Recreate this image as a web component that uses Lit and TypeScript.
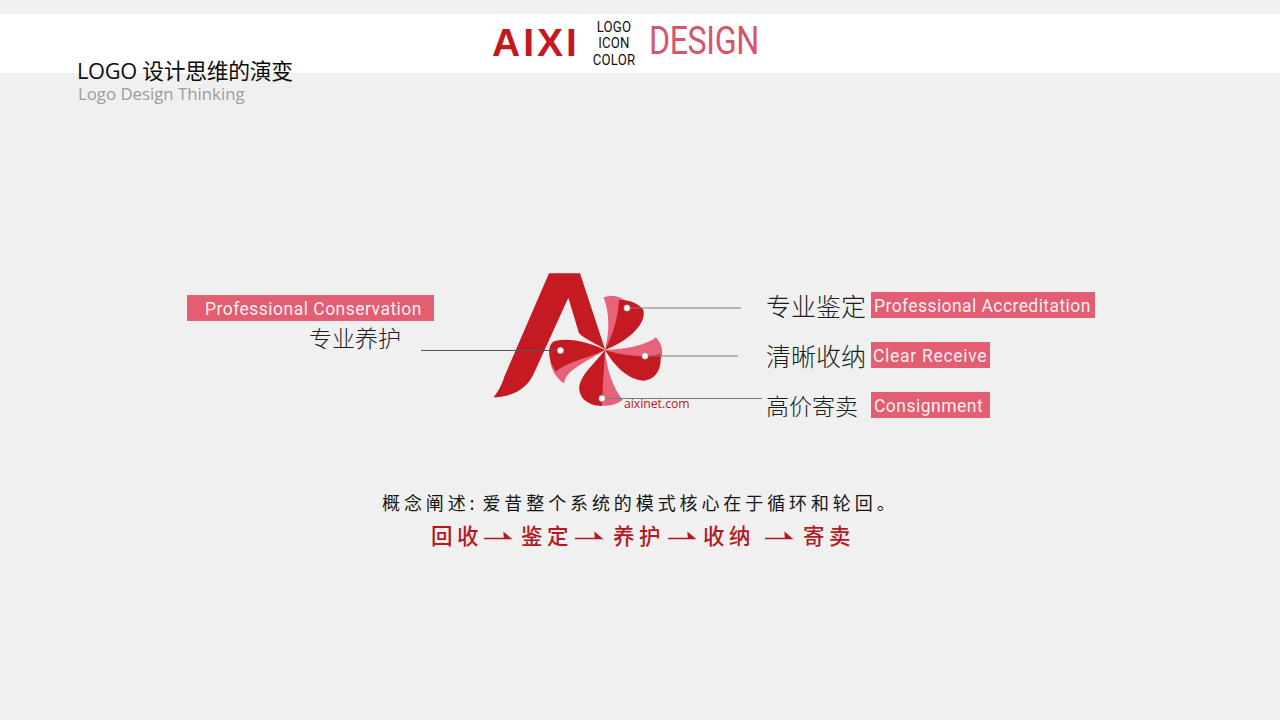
import { LitElement, html, css, svg } from "lit";
import { customElement } from "lit/decorators.js";

const arrow = html`<svg class="arrow" viewBox="0 0 30 12" aria-hidden="true">
  <path d="M0 8.8 H20.5 L20 2.5 L29.5 10.4 H0 Z" fill="#b5191f"></path>
</svg>`;

const logo = svg`
  <path fill="#c61a22" d="M237 40 H330 L405 268 C380 252 345 238 327 220 L295 113 L192 340 C172 385 130 411 70 412 C85 395 95 375 105 345 Z"/>
  <path fill="#e8627a" d="M405 270 C420 210 418 160 401 112 C430 102 455 110 475 128 Z"/>
  <path fill="#c61a22" d="M405 270 C430 220 445 170 447 120 C475 118 508 130 520 150 C530 190 480 240 405 270 Z"/>
  <path fill="#e8627a" d="M405 270 C470 268 530 255 558 232 C578 255 582 280 570 302 L520 310 Z"/>
  <path fill="#c61a22" d="M405 270 C450 285 520 295 570 282 C578 320 560 360 520 362 C475 360 430 315 405 270 Z"/>
  <path fill="#e8627a" d="M405 270 C410 330 430 385 458 420 C435 436 410 440 385 436 Z"/>
  <path fill="#c61a22" d="M405 270 C402 330 397 390 396 438 C350 436 325 412 328 378 C335 340 375 310 405 270 Z"/>
  <path fill="#e8627a" d="M405 270 C345 285 275 295 240 300 C245 335 262 358 283 370 C285 335 330 315 405 270 Z"/>
  <path fill="#c61a22" d="M405 270 C360 248 300 232 255 243 C232 250 230 295 258 335 C290 305 355 295 405 270 Z"/>
`;

const guides = svg`
  <g fill="none">
    <path stroke="#7a7a7a" stroke-width="1.2" d="M627 308 H741"/>
    <path stroke="#7a7a7a" stroke-width="1.2" d="M645 356 H738"/>
    <path stroke="#7a7a7a" stroke-width="1" d="M602 398.5 H762"/>
    <path stroke="#555555" stroke-width="1" d="M421 350.5 H560"/>
  </g>
  <g fill="#fbfbfb" stroke="#8a8a8a" stroke-width=".6">
    <circle cx="627" cy="308" r="3.2"/>
    <circle cx="645" cy="356" r="3.2"/>
    <circle cx="602" cy="398.5" r="3.2"/>
    <circle cx="560.5" cy="350.5" r="3.2"/>
  </g>
`;

@customElement("app-root")
export class AppRoot extends LitElement {
  static styles = css`
    :host {
      display: block;
      width: 1280px;
      height: 720px;
      overflow: hidden;
      background: #f0f0f0;
      font-family: Roboto, "Liberation Sans", sans-serif;
      padding-top: 14px;
      box-sizing: border-box;
    }
    .band {
      height: 59px;
      background: #fff;
      display: flex;
      align-items: center;
      padding-left: 492px;
      box-sizing: border-box;
    }
    .aixi {
      width: 84px;
      margin-top: -2px;
      font: 700 39px/1 "Liberation Sans", sans-serif;
      letter-spacing: 3px;
      color: #c4181f;
      white-space: nowrap;
    }
    .stack {
      width: 74px;
      margin-left: 1px;
      text-align: center;
      font-size: 15.5px;
      line-height: 16.6px;
      letter-spacing: .2px;
      color: #111;
      transform: scaleX(.85);
    }
    .design {
      margin-left: -2px;
      margin-top: -4px;
      font: 400 39px/1 Roboto, sans-serif;
      color: #d5566c;
      white-space: nowrap;
      transform: scaleX(.826);
      transform-origin: left center;
      letter-spacing: -.5px;
    }
    .title {
      margin: -15px 0 0 77px;
      height: 25px;
      font: 400 21.8px/25px "Open Sans", "Noto Sans CJK SC", sans-serif;
      color: #0c0c0c;
      white-space: nowrap;
      letter-spacing: -.3px;
    }
    .sub {
      margin: 1px 0 0 78px;
      height: 20px;
      font: 400 16.8px/20px "Open Sans", sans-serif;
      color: #9c9c9c;
      white-space: nowrap;
    }
    .diagram {
      position: relative;
      margin-top: 156px;
      height: 170px;
    }
    .logo {
      position: absolute;
      left: 470px;
      top: 0;
      width: 240px;
      height: 160px;
    }
    .guides {
      position: absolute;
      left: 0;
      top: -260px;
      width: 1280px;
      height: 720px;
      pointer-events: none;
    }
    .url {
      position: absolute;
      left: 624px;
      top: 136px;
      font: 400 12.2px/16px "Open Sans", sans-serif;
      color: #b5191f;
    }
    .tag {
      position: absolute;
      height: 26px;
      box-sizing: border-box;
      background: #e35d73;
      color: rgba(255, 255, 255, .93);
      font: 400 17.5px/28px Roboto, sans-serif;
      letter-spacing: .48px;
      white-space: nowrap;
    }
    .zh {
      position: absolute;
      font: 200 25px/30px "Noto Sans CJK SC", sans-serif;
      color: #1c1c1c;
      white-space: nowrap;
    }
    .zh.small { font-size: 23px; }
    .t-cons { left: 187px; top: 35px; width: 247px; padding-left: 18px; }
    .t-acc { left: 871px; top: 32px; width: 224px; padding-left: 3px; letter-spacing: .42px; }
    .t-clear { left: 871px; top: 82px; width: 119px; padding-left: 2px; letter-spacing: .7px; }
    .t-con { left: 871px; top: 132px; width: 119px; padding-left: 3px; }
    .z-cons { left: 309px; top: 62px; }
    .z-acc { left: 766px; top: 30px; }
    .z-clear { left: 766px; top: 80px; }
    .z-con { left: 766px; top: 130px; }
    .statement {
      margin: 58px 0 0 382px;
      height: 28px;
      font: 400 18px/28px "Noto Sans CJK SC", sans-serif;
      letter-spacing: 3.9px;
      word-spacing: -4px;
      color: #161616;
      white-space: nowrap;
    }
    .flow {
      margin: 2px 0 0 431px;
      height: 34px;
      display: flex;
      align-items: center;
      font: 500 21.5px/34px "Noto Sans CJK SC", sans-serif;
      letter-spacing: 4.5px;
      color: #b5191f;
      white-space: nowrap;
    }
    .arrow { display: block; width: 29px; height: 12px; flex: none; }
    .a1 { margin: 0 8px 0 1px; }
    .a2 { margin: 0 9px 0 2px; }
    .a3 { margin: 0 6px 0 3px; }
    .a4 { margin: 0 9px 0 10px; }
  `;

  render() {
    return html`
      <div class="band">
        <div class="aixi">AIXI</div>
        <div class="stack">LOGO<br />ICON<br />COLOR</div>
        <div class="design">DESIGN</div>
      </div>
      <div class="title">LOGO 设计思维的演变</div>
      <div class="sub">Logo Design Thinking</div>
      <div class="diagram">
        <svg class="logo" viewBox="0 0 720 480" aria-label="AIXI logo">${logo}</svg>
        <svg class="guides" viewBox="0 0 1280 720" aria-hidden="true">${guides}</svg>
        <div class="url">aixinet.com</div>
        <div class="tag t-cons">Professional Conservation</div>
        <div class="zh small z-cons">专业养护</div>
        <div class="zh z-acc">专业鉴定</div>
        <div class="tag t-acc">Professional Accreditation</div>
        <div class="zh z-clear">清晰收纳</div>
        <div class="tag t-clear">Clear Receive</div>
        <div class="zh small z-con">高价寄卖</div>
        <div class="tag t-con">Consignment</div>
      </div>
      <div class="statement">概念阐述: 爱昔整个系统的模式核心在于循环和轮回。</div>
      <div class="flow">
        <span>回收</span><span class="a1">${arrow}</span>
        <span>鉴定</span><span class="a2">${arrow}</span>
        <span>养护</span><span class="a3">${arrow}</span>
        <span>收纳</span><span class="a4">${arrow}</span>
        <span>寄卖</span>
      </div>
    `;
  }
}
